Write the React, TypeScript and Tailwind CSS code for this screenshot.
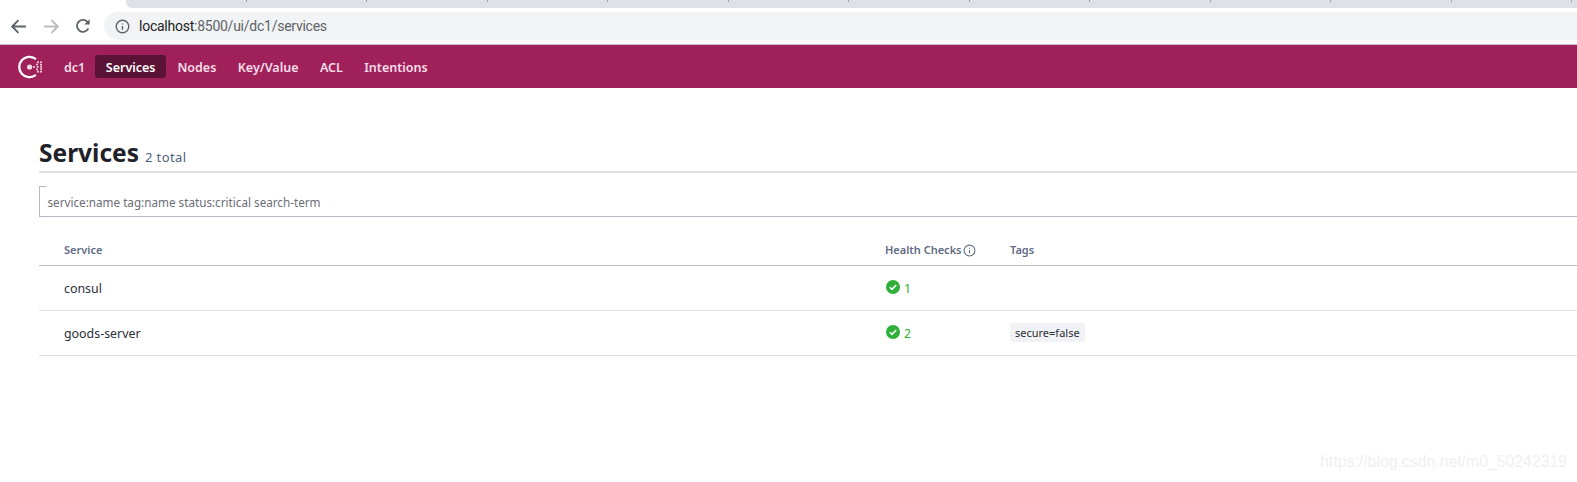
import React from 'react';

function ConsulLogo() {
  return (
    <svg width="26" height="26" viewBox="0 0 26 26" fill="none">
      <path d="M17.2 4.6A10.2 10.2 0 1 0 17.2 21.4" stroke="#fff" strokeWidth="2.3" strokeLinecap="round" />
      <circle cx="11.6" cy="13" r="2.6" fill="#f4dbe6" />
      <circle cx="16" cy="13" r="1.1" fill="#f4dbe6" />
      {[
        [20, 8.2], [23, 8.2], [19, 10.6], [23, 10.8], [19.6, 13], [23.2, 13], [19, 15.4], [23, 15.2], [20, 17.8], [23, 17.8],
      ].map(([cx, cy]) => (
        <circle key={`${cx}-${cy}`} cx={cx} cy={cy} r="1" fill="#f4dbe6" />
      ))}
    </svg>
  );
}

function CheckIcon() {
  return (
    <svg width="14" height="14" viewBox="0 0 14 14" className="mb-[2px] shrink-0">
      <circle cx="7" cy="7" r="7" fill="#2eb039" />
      <path d="M3.8 7.2l2.2 2.2 4.2-4.4" stroke="#fff" strokeWidth="1.6" fill="none" />
    </svg>
  );
}

function InfoIcon({ size, color, width }: { size: number; color: string; width: number }) {
  return (
    <svg width={size} height={size} viewBox="0 0 24 24" fill="none" stroke={color} strokeWidth={width}>
      <circle cx="12" cy="12" r="10" />
      <path d="M12 11v6M12 7v1.6" />
    </svg>
  );
}

const tabs = Array.from({ length: 12 });
const nav = ['Services', 'Nodes', 'Key/Value', 'ACL', 'Intentions'];

export default function App() {
  return (
    <div className="relative h-[482px] w-[1577px] overflow-hidden bg-white" style={{ fontFamily: "'Noto Sans', sans-serif" }}>
      {/* browser chrome */}
      <div className="flex h-2 bg-white pl-[126px]">
        <div className="flex h-2 flex-1 rounded-bl-md bg-[#dee1e6]">
          {tabs.map((_, i) => (
            <div key={i} className="h-[2px] w-[120.5px] shrink-0 border-r border-[#9aa0a6]" />
          ))}
        </div>
      </div>
      <div className="flex h-[37px] items-center border-b border-[#c4c4c6] bg-white">
        <div className="flex w-[104px] shrink-0 items-center pl-[10px] gap-[16px]">
          <svg width="17" height="17" viewBox="0 0 16 16" fill="none" stroke="#5f6368" strokeWidth="1.8">
            <path d="M15 8H2M8 2L2 8l6 6" />
          </svg>
          <svg width="17" height="17" viewBox="0 0 16 16" fill="none" stroke="#b9bbbe" strokeWidth="1.8">
            <path d="M1 8h13M8 2l6 6-6 6" />
          </svg>
          <svg width="16" height="16" viewBox="0 0 16 16" fill="none" stroke="#5f6368" strokeWidth="1.8" className="ml-[-1px]">
            <path d="M13.4 10.4A6 6 0 1 1 13 4.6" />
            <path d="M14.7 1.2v5.4H9.3z" fill="#5f6368" stroke="none" />
          </svg>
        </div>
        <div className="flex h-[28px] flex-1 items-center gap-[9px] rounded-l-full bg-[#f1f3f4] pl-[11px]" style={{ fontFamily: "'Roboto', sans-serif" }}>
          <InfoIcon size={15} color="#5f6368" width={2.2} />
          <span className="text-[14px] tracking-[-0.25px] text-[#5f6368]"><span className="text-[#202124]">localhost</span>:8500/ui/dc1/services</span>
        </div>
      </div>

      {/* app nav */}
      <nav className="flex h-[43px] items-center bg-[#a0215a] pl-[18px] text-[12.5px] font-semibold text-[#f6dfe9]">
        <ConsulLogo />
        <span className="ml-[20px] pt-[3px]">dc1</span>
        <ul className="ml-[10px] flex items-center gap-[1.4px]">
          {nav.map((n, i) => (
            <li key={n} className={i === 0 ? 'flex h-[23px] items-center rounded-[3px] bg-[#5a1336] px-[10.5px] pt-[3px] text-white' : 'flex h-[23px] items-center px-[10px] pt-[3px]'}>
              {n}
            </li>
          ))}
        </ul>
      </nav>

      {/* main */}
      <main className="pl-[39px]">
        <div className="flex h-[85px] items-end border-b-2 border-[#dfe0e8]">
          <h1 className="text-[24.5px] font-bold leading-[36px] text-[#1f2229]">Services</h1>
          <span className="mb-[4px] ml-[6px] text-[13px] leading-[20px] tracking-[0.4px] text-[#4f6180]">2 total</span>
        </div>
        <div className="relative mt-[13px] flex h-[31px] items-center border-b border-l border-[#b4b8c8] pl-[7.5px] pt-[3px] text-[11.7px] text-[#6b6e76]">
          <div className="absolute left-0 top-0 h-px w-[6px] bg-[#b4b8c8]" />
          service:name tag:name status:critical search-term
        </div>

        <div className="mt-[16px] grid h-[33px] grid-cols-[846px_125px_1fr] items-center border-b border-[#b8bac6] pt-[2px] text-[11px] font-semibold text-[#5f6b85]">
          <div className="pl-[25px]">Service</div>
          <div className="flex items-center gap-[1px]">
            Health Checks
            <InfoIcon size={13} color="#5f6b85" width={2} />
          </div>
          <div>Tags</div>
        </div>

        {[
          { name: 'consul', count: 1, tag: '' },
          { name: 'goods-server', count: 2, tag: 'secure=false' },
        ].map((s) => (
          <div key={s.name} className="grid h-[45px] grid-cols-[846px_125px_1fr] items-center border-b border-[#dfe0e8] text-[12.4px] text-[#2b2e36]">
            <div className="pl-[25px] pt-[2px]">{s.name}</div>
            <div className="flex items-center gap-[4px] pl-[1px] text-[#2eb039]">
              <CheckIcon />
              <span className="pt-[2px] text-[12.4px]">{s.count}</span>
            </div>
            <div>
              {s.tag && (
                <span className="inline-block rounded-[2px] bg-[#f1f2f5] px-[5px] py-[1px] text-[11px] leading-[17px] text-[#2b2e36]">{s.tag}</span>
              )}
            </div>
          </div>
        ))}
      </main>

      {/* watermark over the page */}
      <div className="absolute bottom-[8px] right-[10px] text-[15.8px] text-[#f0f0f0]" style={{ fontFamily: "'Liberation Sans', sans-serif" }}>
        https://blog.csdn.net/m0_50242319
      </div>
    </div>
  );
}
